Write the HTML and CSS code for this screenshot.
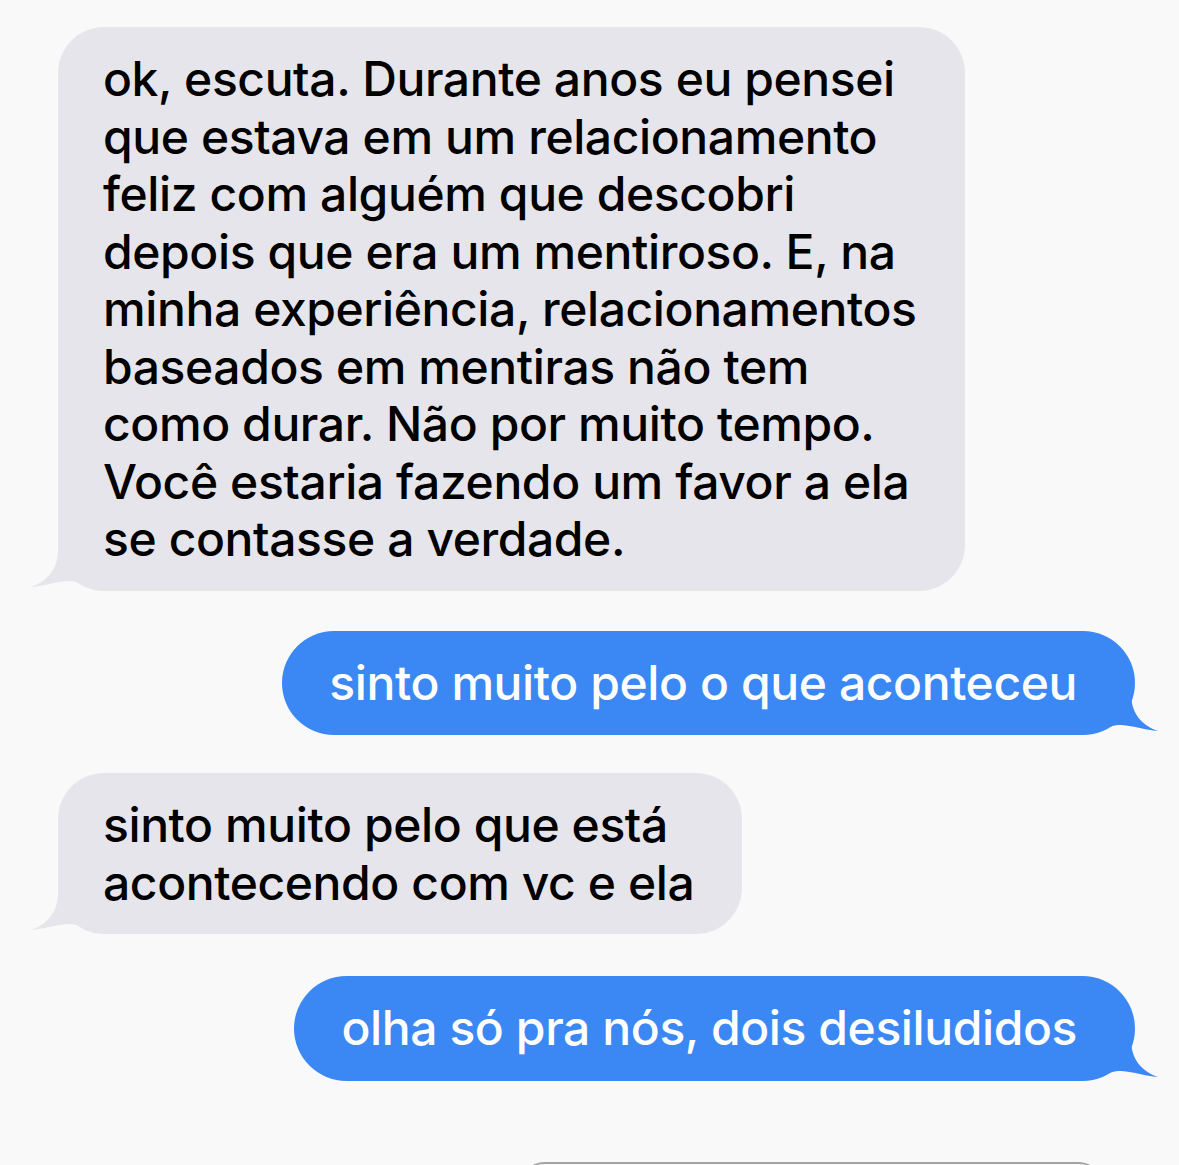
FILE: index.html
```html
<!DOCTYPE html>
<html lang="pt">
<head>
    <meta charset="UTF-8">
    <meta name="viewport" content="width=device-width, initial-scale=1.0">
    <title>Mensagens</title>
    <link rel="stylesheet" href="styles.css">
</head>
<body>
    <div class="thread">
        <div class="msg in">
            ok, escuta. Durante anos eu pensei<br>
            que estava em um relacionamento<br>
            feliz com alguém que descobri<br>
            depois que era um mentiroso. E, na<br>
            minha experiência, relacionamentos<br>
            baseados em mentiras não tem<br>
            como durar. Não por muito tempo.<br>
            Você estaria fazendo um favor a ela<br>
            se contasse a verdade.
            <svg class="tail" viewBox="0 0 80 50" width="80" height="50"><path d="M28,0 L28,8 C28,28 18,40 1,46 C14,45 24,41 38,40 C52,40 60,48 80,50 L80,0 Z"/></svg>
        </div>

        <div class="msg out">
            sinto muito pelo o que aconteceu
            <svg class="tail" viewBox="0 0 80 50" width="80" height="50"><path d="M28,0 L28,8 C28,28 18,40 1,46 C14,45 24,41 38,40 C52,40 60,48 80,50 L80,0 Z"/></svg>
        </div>

        <div class="msg in second">
            sinto muito pelo que está<br>
            acontecendo com vc e ela
            <svg class="tail" viewBox="0 0 80 50" width="80" height="50"><path d="M28,0 L28,8 C28,28 18,40 1,46 C14,45 24,41 38,40 C52,40 60,48 80,50 L80,0 Z"/></svg>
        </div>

        <div class="msg out last">
            olha só pra nós, dois desiludidos
            <svg class="tail" viewBox="0 0 80 50" width="80" height="50"><path d="M28,0 L28,8 C28,28 18,40 1,46 C14,45 24,41 38,40 C52,40 60,48 80,50 L80,0 Z"/></svg>
        </div>
    </div>

    <div class="composer"></div>
</body>
</html>
```

FILE: styles.css
```css
body {
    margin: 0;
    height: 1165px;
    overflow: hidden;
    background: #f9f9f9;
    font-family: Inter, "Noto Sans", sans-serif;
    position: relative;
}
.thread {
    display: flex;
    flex-direction: column;
    gap: 40px;
    padding: 27px 44px 0 58px;
}
.msg {
    position: relative;
    z-index: 0;
    border-radius: 46px;
    padding: 23px 48px 23px 45px;
    font-size: 48px;
    font-weight: 500;
    line-height: 57.5px;
    letter-spacing: -0.4px;
}
.in {
    align-self: flex-start;
    background: #e6e5eb;
    color: #000;
}
.out {
    align-self: flex-end;
    background: #3b88f5;
    color: #fff;
    padding: 23px 58px 24px 47px;
    border-radius: 53px;
}
.second {
    margin-top: -2px;
}
.last {
    margin-top: 2px;
}
.tail {
    position: absolute;
    z-index: -1;
    bottom: 0;
    left: -28px;
}
.in .tail path {
    fill: #e6e5eb;
}
.out .tail {
    left: auto;
    right: -24px;
    transform: scaleX(-1);
}
.out .tail path {
    fill: #3b88f5;
}
.composer {
    position: absolute;
    left: 522px;
    width: 579px;
    top: 1162px;
    height: 20px;
    border-top: 2px solid #a3a3a3;
    border-radius: 24px 24px 0 0;
}
```
